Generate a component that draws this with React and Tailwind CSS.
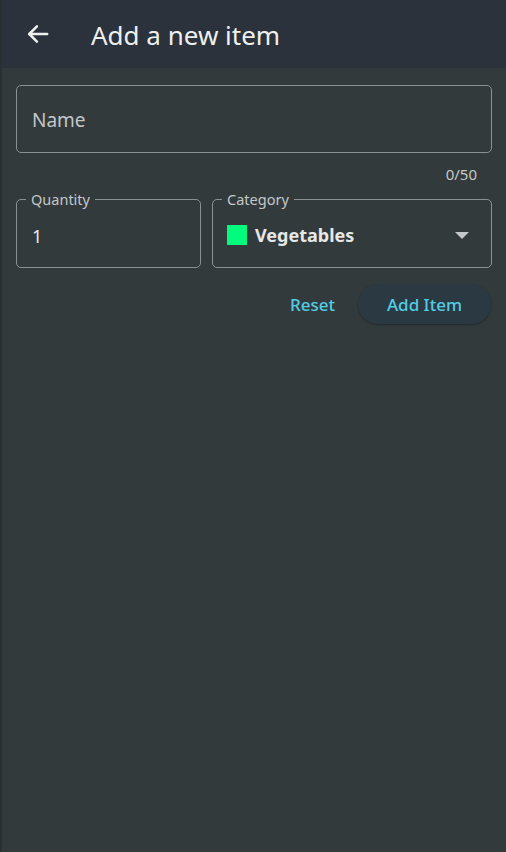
import { useState } from 'react'

function OutlinedBox({ label, className = '', children }) {
  return (
    <div className={`relative rounded-[5px] border border-[#8b9192] ${className}`}>
      {label && (
        <span className="absolute -top-[10px] left-[9px] bg-[#333a3c] px-[5px] text-[14.5px] leading-[18px] text-[#c4c8c8]">
          {label}
        </span>
      )}
      {children}
    </div>
  )
}

export default function App() {
  const [name] = useState('')

  return (
    <div
      className="flex h-[852px] w-full flex-col border-l-2 border-[#2a3032] bg-[#333a3c] text-[#e6e8e8]"
      style={{ fontFamily: '"Noto Sans", "Open Sans", Arial, sans-serif' }}
    >
      <header className="flex h-[68px] items-center bg-[#2b323b] pl-[23px]">
        <button type="button" className="flex h-[26px] w-[26px] items-center justify-center text-[#eef0f0]">
          <svg width="26" height="26" viewBox="0 0 24 24" fill="none" stroke="currentColor" strokeWidth="2.3" strokeLinecap="round" strokeLinejoin="round">
            <path d="M20.5 12H4" />
            <path d="M11 5 4 12l7 7" />
          </svg>
        </button>
        <h1 className="ml-[40px] mt-[2px] text-[26px] font-normal leading-none text-[#eef0f0]">
          Add a new item
        </h1>
      </header>

      <main className="flex flex-col px-[14px] pt-[17px]">
        <OutlinedBox className="flex h-[68px] items-center px-[15px] pt-[3px]">
          <span className="text-[19px] text-[#c4c8c8]">{name || 'Name'}</span>
        </OutlinedBox>
        <div className="mt-[12px] flex justify-end pr-[15px] text-[15px] leading-[18px] text-[#c4c8c8]">
          0/50
        </div>

        <div className="mt-[16px] flex gap-[11px]">
          <OutlinedBox label="Quantity" className="flex h-[69px] w-[185px] items-center px-[15px] pt-[5px]">
            <span className="text-[18px] text-[#e6e8e8]">1</span>
          </OutlinedBox>
          <OutlinedBox label="Category" className="flex h-[69px] flex-1 items-center px-[14px] pt-[3px]">
            <span className="h-[20px] w-[20px] bg-[#00fb7d]" />
            <span className="ml-[8px] text-[18px] font-bold text-[#e6e8e8]">Vegetables</span>
            <svg className="ml-auto mr-[8px]" width="14" height="7" viewBox="0 0 14 7">
              <path d="M0 0h14L7 7z" fill="#c4c8c8" />
            </svg>
          </OutlinedBox>
        </div>

        <div className="mt-[16px] flex items-center justify-end pr-[1px]">
          <button type="button" className="px-[10px] pt-[2px] text-[17px] font-medium text-[#53cde6]">
            Reset
          </button>
          <button
            type="button"
            className="ml-[13px] h-[40px] w-[133px] rounded-full bg-[#2b3a42] pt-[2px] text-[17px] font-medium text-[#53cde6] shadow-[0_1px_2px_rgba(0,0,0,0.3)]"
          >
            Add Item
          </button>
        </div>
      </main>
    </div>
  )
}
